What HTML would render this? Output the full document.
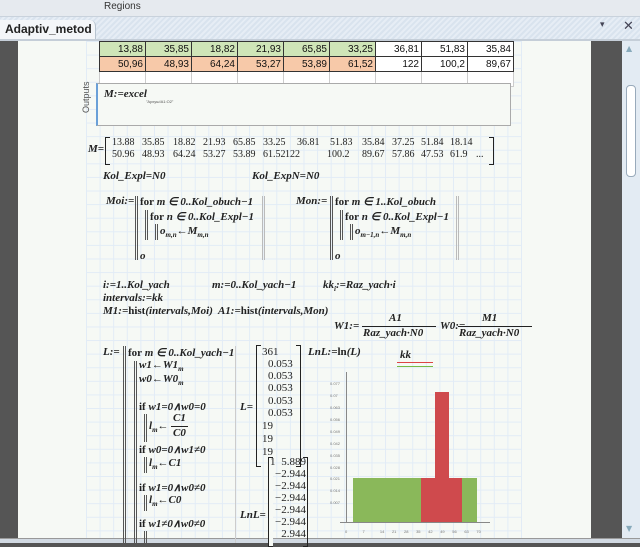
<!DOCTYPE html>
<html><head><meta charset="utf-8"><style>
*{margin:0;padding:0;box-sizing:border-box}
body{width:640px;height:543px;overflow:hidden;position:relative;background:#555;font-family:"Liberation Serif",serif;color:#111}
.a{position:absolute;white-space:nowrap}
.m{font-family:"Liberation Serif",serif;font-size:11px;font-style:italic;font-weight:bold;color:#222}
.n{font-style:normal}
.s{font-size:7px}
.v{position:absolute;font:10px "Liberation Serif",serif;color:#222}
.tb td{border:1px solid #333;width:46px;height:15px;font:10px "Liberation Sans",sans-serif;text-align:right;padding-right:2px}
.bar{position:absolute;border-left:1px solid #555;border-right:1px solid #555;width:3px}
.t{position:absolute;font:4px "Liberation Sans",sans-serif;color:#777}
</style></head><body>
<div class="a" style="left:0;top:0;width:640px;height:17px;background:#e6eaef;border-bottom:1px solid #c9d2dc"></div>
<div class="a" style="left:104px;top:1px;font:10px 'Liberation Sans',sans-serif;color:#333">Regions</div>
<div class="a" style="left:0;top:17px;width:640px;height:22px;background:repeating-linear-gradient(135deg,#d9e3ee 0 2px,#e6edf5 2px 4px)"></div>
<div class="a" style="left:0;top:20px;width:96px;height:19px;background:#f4f6f9;border-top-right-radius:6px;border-right:1px solid #b8c4d0"></div>
<div class="a" style="left:5px;top:22px;font:bold 12px 'Liberation Sans',sans-serif;color:#222">Adaptiv_metod</div>
<div class="a" style="left:600px;top:20px;font:9px 'DejaVu Sans',sans-serif;color:#445">▾</div>
<div class="a" style="left:623px;top:19px;font:13px 'DejaVu Sans',sans-serif;color:#445">✕</div>
<div class="a" style="left:0;top:39px;width:640px;height:2px;background:#c5ced8"></div>
<div class="a" style="left:18px;top:41px;width:573px;height:497px;background:#f6f9f5"></div>
<div class="a" style="left:86px;top:41px;width:436px;height:497px;background-image:linear-gradient(90deg,#e2ecf6 1px,transparent 1px),linear-gradient(#e2ecf6 1px,transparent 1px);background-size:13.6px 13.6px"></div>
<div class="a" style="left:622px;top:41px;width:18px;height:497px;background:#e3ebf3"></div>
<div class="a" style="left:626px;top:44px;font:8px 'DejaVu Sans';color:#8ab">▲</div>
<div class="a" style="left:626px;top:524px;font:8px 'DejaVu Sans';color:#8ab">▼</div>
<div class="a" style="left:626px;top:85px;width:10px;height:92px;background:#fff;border:1px solid #9ab;border-radius:4px"></div>
<div class="a" style="left:0;top:538px;width:640px;height:5px;background:#d2dae3;border-top:1px solid #999"></div>
<table class="tb a" style="left:99px;top:41px;border-collapse:collapse">
<tr><td style="background:#cfe5b8">13,88</td><td style="background:#cfe5b8">35,85</td><td style="background:#cfe5b8">18,82</td><td style="background:#cfe5b8">21,93</td><td style="background:#cfe5b8">65,85</td><td style="background:#cfe5b8">33,25</td><td style="background:#fff">36,81</td><td style="background:#fff">51,83</td><td style="background:#fff">35,84</td></tr>
<tr><td style="background:#f7c9a9">50,96</td><td style="background:#f7c9a9">48,93</td><td style="background:#f7c9a9">64,24</td><td style="background:#f7c9a9">53,27</td><td style="background:#f7c9a9">53,89</td><td style="background:#f7c9a9">61,52</td><td style="background:#fff">122</td><td style="background:#fff">100,2</td><td style="background:#fff">89,67</td></tr>
<tr><td style="background:#fff;border-color:#ccc"></td><td style="background:#fff;border-color:#ccc"></td><td style="background:#fff;border-color:#ccc"></td><td style="background:#fff;border-color:#ccc"></td><td style="background:#fff;border-color:#ccc"></td><td style="background:#fff;border-color:#ccc"></td><td style="background:#fff;border-color:#ccc"></td><td style="background:#fff;border-color:#ccc"></td><td style="background:#fff;border-color:#ccc"></td></tr>
</table>
<div class="a" style="left:96px;top:83px;width:415px;height:43px;border:1px solid #aaa;border-left:2px solid #6aa0d8;background:#f6f9f5"></div>
<div class="a" style="left:81px;top:113px;font:9px 'Liberation Sans',sans-serif;color:#555;transform:rotate(-90deg);transform-origin:0 0">Outputs</div>
<div class="a m" style="left:104px;top:88px">M:=excel</div>
<div class="a" style="left:146px;top:99px;font:4px 'Liberation Sans';color:#555">"Архуш!A1:O2"</div>
<!-- M matrix -->
<div class="a m" style="left:88px;top:143px">M=</div>
<div class="a" style="left:105px;top:137px;width:5px;height:28px;border:1px solid #222;border-right:none"></div>
<div class="a" style="left:489px;top:137px;width:5px;height:28px;border:1px solid #222;border-left:none"></div>
<div class="v" style="left:112px;top:137px">13.88</div><div class="v" style="left:142px;top:137px">35.85</div><div class="v" style="left:173px;top:137px">18.82</div><div class="v" style="left:203px;top:137px">21.93</div><div class="v" style="left:233px;top:137px">65.85</div><div class="v" style="left:263px;top:137px">33.25</div><div class="v" style="left:297px;top:137px">36.81</div><div class="v" style="left:330px;top:137px">51.83</div><div class="v" style="left:362px;top:137px">35.84</div><div class="v" style="left:392px;top:137px">37.25</div><div class="v" style="left:421px;top:137px">51.84</div><div class="v" style="left:450px;top:137px">18.14</div>
<div class="v" style="left:112px;top:149px">50.96</div><div class="v" style="left:142px;top:149px">48.93</div><div class="v" style="left:173px;top:149px">64.24</div><div class="v" style="left:203px;top:149px">53.27</div><div class="v" style="left:233px;top:149px">53.89</div><div class="v" style="left:263px;top:149px">61.52</div><div class="v" style="left:285px;top:149px">122</div><div class="v" style="left:327px;top:149px">100.2</div><div class="v" style="left:362px;top:149px">89.67</div><div class="v" style="left:392px;top:149px">57.86</div><div class="v" style="left:421px;top:149px">47.53</div><div class="v" style="left:450px;top:149px">61.9</div><div class="v" style="left:476px;top:149px">...</div>
<div class="a m" style="left:103px;top:170px">Kol_Expl=N0</div>
<div class="a m" style="left:252px;top:170px">Kol_ExpN=N0</div>
<div class="a m" style="left:106px;top:195px">Moi:=</div>
<div class="bar" style="left:135px;top:196px;height:64px"></div>
<div class="a m" style="left:140px;top:195px"><span class="n">for</span> m ∈ 0..Kol_obuch−1</div>
<div class="bar" style="left:145px;top:210px;height:30px"></div>
<div class="a m" style="left:150px;top:210px"><span class="n">for</span> n ∈ 0..Kol_Expl−1</div>
<div class="bar" style="left:155px;top:224px;height:16px"></div>
<div class="a m" style="left:160px;top:225px">o<sub class="s">m,n</sub>←M<sub class="s">m,n</sub></div>
<div class="a m" style="left:140px;top:250px">o</div>
<div class="bar" style="left:262px;top:196px;height:64px;border-color:#bbb"></div>
<div class="a m" style="left:296px;top:195px">Mon:=</div>
<div class="bar" style="left:330px;top:196px;height:64px"></div>
<div class="a m" style="left:335px;top:195px"><span class="n">for</span> m ∈ 1..Kol_obuch</div>
<div class="bar" style="left:340px;top:210px;height:30px"></div>
<div class="a m" style="left:345px;top:210px"><span class="n">for</span> n ∈ 0..Kol_Expl−1</div>
<div class="bar" style="left:350px;top:224px;height:16px"></div>
<div class="a m" style="left:355px;top:225px">o<sub class="s">m−1,n</sub>←M<sub class="s">m,n</sub></div>
<div class="a m" style="left:335px;top:250px">o</div>
<div class="bar" style="left:456px;top:196px;height:64px;border-color:#bbb"></div>
<div class="a m" style="left:103px;top:279px">i:=1..Kol_yach</div>
<div class="a m" style="left:212px;top:279px">m:=0..Kol_yach−1</div>
<div class="a m" style="left:323px;top:279px">kk<sub class="s">i</sub>:=Raz_yach·i</div>
<div class="a m" style="left:103px;top:292px">intervals:=kk</div>
<div class="a m" style="left:103px;top:305px">M1:=<span class="n">hist</span>(intervals,Moi)&nbsp; A1:=<span class="n">hist</span>(intervals,Mon)</div>
<div class="a m" style="left:334px;top:320px">W1:=</div>
<div class="a m" style="left:389px;top:312px">A1</div>
<div class="a" style="left:362px;top:326px;width:74px;border-top:1px solid #222"></div>
<div class="a m" style="left:363px;top:327px">Raz_yach·N0</div>
<div class="a m" style="left:440px;top:320px">W0:=</div>
<div class="a m" style="left:482px;top:312px">M1</div>
<div class="a" style="left:458px;top:326px;width:74px;border-top:1px solid #222"></div>
<div class="a m" style="left:459px;top:327px">Raz_yach·N0</div>
<div class="a m" style="left:103px;top:346px">L:=</div>
<div class="bar" style="left:123px;top:346px;height:197px"></div>
<div class="a m" style="left:128px;top:346px"><span class="n">for</span> m ∈ 0..Kol_yach−1</div>
<div class="bar" style="left:134px;top:361px;height:182px"></div>
<div class="a m" style="left:139px;top:359px">w1←W1<sub class="s">m</sub></div>
<div class="a m" style="left:139px;top:373px">w0←W0<sub class="s">m</sub></div>
<div class="a m" style="left:139px;top:400px"><span class="n">if</span> w1=0∧w0=0</div>
<div class="bar" style="left:144px;top:414px;height:28px"></div>
<div class="a m" style="left:149px;top:420px">l<sub class="s">m</sub>←</div>
<div class="a m" style="left:173px;top:412px">C1</div>
<div class="a" style="left:171px;top:426px;width:17px;border-top:1px solid #222"></div>
<div class="a m" style="left:173px;top:427px">C0</div>
<div class="a m" style="left:139px;top:443px"><span class="n">if</span> w0=0∧w1≠0</div>
<div class="bar" style="left:144px;top:457px;height:16px"></div>
<div class="a m" style="left:149px;top:457px">l<sub class="s">m</sub>←C1</div>
<div class="a m" style="left:139px;top:481px"><span class="n">if</span> w1=0∧w0≠0</div>
<div class="bar" style="left:144px;top:495px;height:16px"></div>
<div class="a m" style="left:149px;top:494px">l<sub class="s">m</sub>←C0</div>
<div class="a m" style="left:139px;top:517px"><span class="n">if</span> w1≠0∧w0≠0</div>
<div class="bar" style="left:144px;top:531px;height:12px"></div>
<div class="a" style="left:235px;top:346px;height:197px;border-left:1px solid #ccc"></div>
<div class="a m" style="left:240px;top:401px">L=</div>
<div class="a" style="left:256px;top:345px;width:5px;height:122px;border:1px solid #222;border-right:none"></div>
<div class="a" style="left:296px;top:345px;width:5px;height:122px;border:1px solid #222;border-left:none"></div>
<div class="a m n" style="left:262px;top:346px;font-weight:normal">361</div>
<div class="a m n" style="left:268px;top:358px;font-weight:normal;line-height:12.2px">0.053<br>0.053<br>0.053<br>0.053<br>0.053</div>
<div class="a m n" style="left:262px;top:420px;font-weight:normal;line-height:13px">19<br>19<br>19</div>
<div class="a m" style="left:308px;top:346px">LnL:=<span class="n">ln</span>(L)</div>
<div class="a m" style="left:240px;top:509px">LnL=</div>
<div class="a" style="left:268px;top:457px;width:5px;height:90px;border:1px solid #222;border-right:none;background:#f6f9f5"></div>
<div class="a" style="left:303px;top:457px;width:5px;height:90px;border:1px solid #222;border-left:none"></div>
<div class="a m n" style="left:270px;top:456px;font-weight:normal">1</div>
<div class="a m n" style="left:275px;top:456px;font-weight:normal;line-height:12px;text-align:right">5.889<br>−2.944<br>−2.944<br>−2.944<br>−2.944<br>−2.944<br>2.944</div>
<div class="a m" style="left:400px;top:349px">kk</div>
<div class="a" style="left:397px;top:362px;width:36px;border-top:1px solid #d44"></div>
<div class="a" style="left:397px;top:366px;width:36px;border-top:1px solid #7b4"></div>
<div class="a" style="left:346px;top:372px;height:151px;border-left:1px solid #888"></div>
<div class="a" style="left:340px;top:522px;width:150px;border-top:1px solid #888"></div>
<div class="a" style="left:353px;top:478px;width:68px;height:44px;background:#8ab85a"></div>
<div class="a" style="left:421px;top:478px;width:14px;height:44px;background:#cf4a4d"></div>
<div class="a" style="left:435px;top:392px;width:14px;height:130px;background:#cf4a4d"></div>
<div class="a" style="left:449px;top:478px;width:13px;height:44px;background:#cf4a4d"></div>
<div class="a" style="left:462px;top:478px;width:15px;height:44px;background:#8ab85a"></div>
<div class="t" style="left:330px;top:381px">0.077</div><div class="t" style="left:330px;top:393px">0.07</div><div class="t" style="left:330px;top:405px">0.063</div><div class="t" style="left:330px;top:417px">0.056</div><div class="t" style="left:330px;top:429px">0.049</div><div class="t" style="left:330px;top:441px">0.042</div><div class="t" style="left:330px;top:453px">0.035</div><div class="t" style="left:330px;top:465px">0.028</div><div class="t" style="left:330px;top:476px">0.021</div><div class="t" style="left:330px;top:488px">0.014</div><div class="t" style="left:330px;top:500px">0.007</div>
<div class="t" style="left:345px;top:529px;word-spacing:6.5px">0 &nbsp;7 &nbsp;14 21 28 35 42 49 56 63 70</div>
</body></html>
